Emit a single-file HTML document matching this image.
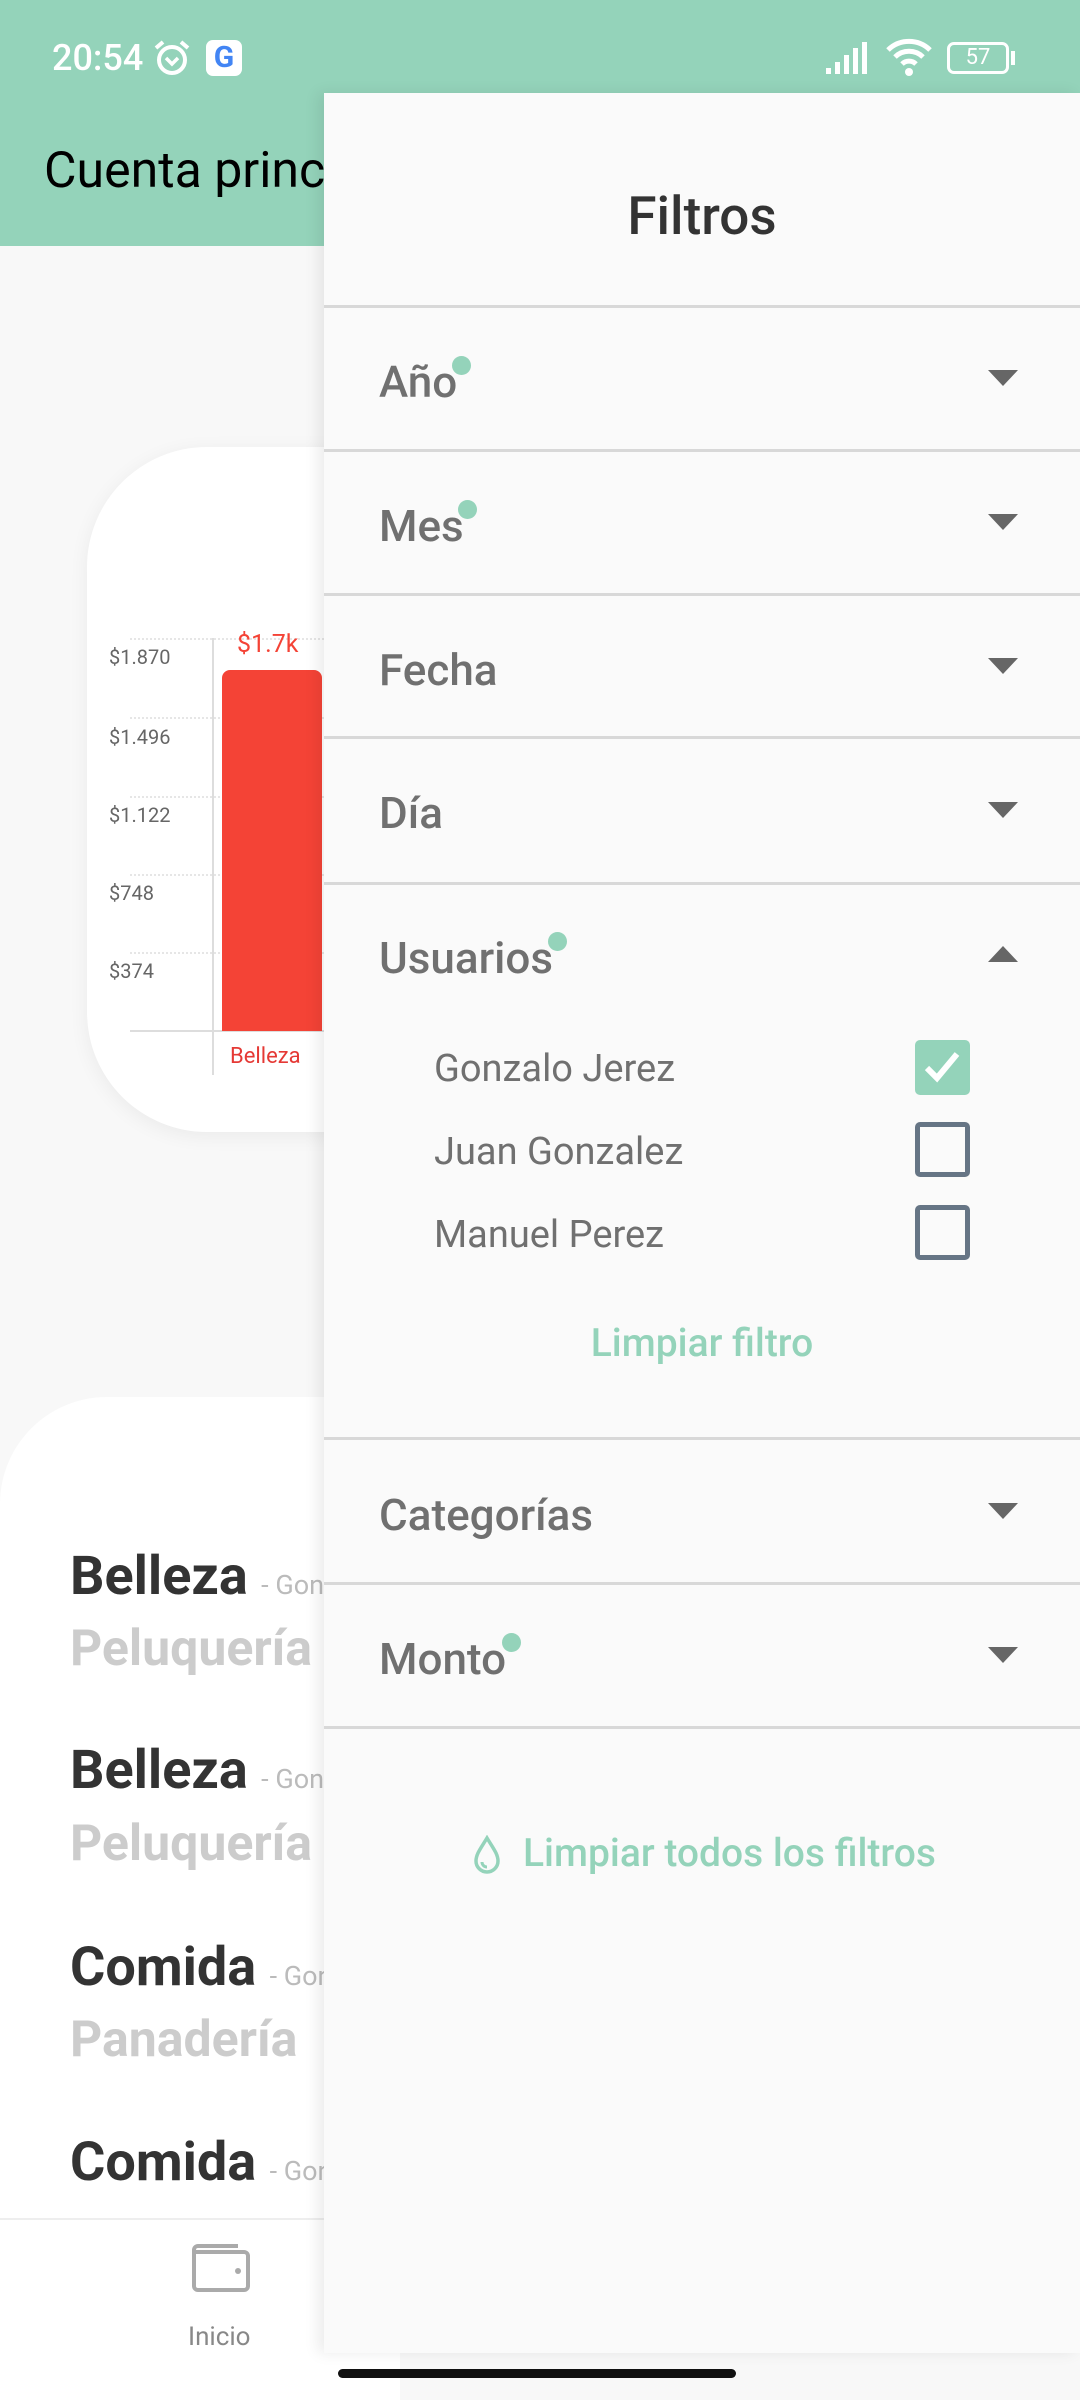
<!DOCTYPE html>
<html><head><meta charset="utf-8"><style>
*{margin:0;padding:0;box-sizing:border-box}
body{width:1080px;height:2400px;position:relative;overflow:hidden;background:#f8f8f8;font-family:"Roboto","Liberation Sans",sans-serif}
.abs{position:absolute}
.sb{left:0;top:0;width:1080px;height:246px;background:#94d3ba}
.t{white-space:nowrap;line-height:1}
.row{position:absolute;left:379px;font-size:44px;color:#707070;font-weight:500;transform:translateY(-50%)}
.dot{position:absolute;width:19px;height:19px;border-radius:50%;background:#94d3ba}
.arr{position:absolute;left:988px;width:0;height:0;border-left:15px solid transparent;border-right:15px solid transparent;border-top:16px solid #666}
.up{border-top:none;border-bottom:16px solid #666}
.hr{position:absolute;left:324px;width:756px;height:3px;background:#d8d8d8}
.u{position:absolute;left:434px;font-size:38px;color:#707070;transform:translateY(-50%)}
.cb{position:absolute;left:915px;width:55px;height:55px;border:5px solid #667585;border-radius:5px}
.yl{position:absolute;left:109px;font-size:20px;color:#666;transform:translateY(-50%)}
.gl{position:absolute;left:130px;width:194px;border-top:2px dotted #e6e6e6}
.li{position:absolute;left:70px;font-size:54px;font-weight:bold;color:#333;transform:translateY(-50%)}
.li span{font-size:27px;font-weight:normal;color:#bbb}
.sub{position:absolute;left:70px;font-size:50px;font-weight:bold;color:#ccc;transform:translateY(-50%)}
</style></head><body>
<div class="abs sb"></div>
<div class="abs t" style="left:52px;top:40px;font-size:36px;color:#fff;font-weight:500">20:54</div>
<svg class="abs" style="left:152px;top:38px" width="40" height="40" viewBox="0 0 40 40"><circle cx="20" cy="22" r="13" fill="none" stroke="#fff" stroke-width="4"/><path d="M14 20l6 6 6-6" fill="none" stroke="#fff" stroke-width="3.5"/><path d="M4 10l7-6M36 10l-7-6" stroke="#fff" stroke-width="4"/></svg>
<div class="abs" style="left:206px;top:40px;width:36px;height:36px;background:#fff;border-radius:7px;font-size:30px;font-weight:bold;color:#4285f4;text-align:center;line-height:36px">G</div>
<svg class="abs" style="left:824px;top:40px" width="50" height="36" viewBox="0 0 50 36"><rect x="2" y="28" width="5" height="6" fill="#fff"/><rect x="11" y="22" width="5" height="12" fill="#fff"/><rect x="20" y="15" width="5" height="19" fill="#fff"/><rect x="29" y="8" width="5" height="26" fill="#fff"/><rect x="38" y="2" width="5" height="32" fill="#fff"/></svg>
<svg class="abs" style="left:884px;top:36px" width="50" height="42" viewBox="0 0 50 42"><path d="M4 14a30 30 0 0 1 42 0M11 21a20 20 0 0 1 28 0M18 28a10 10 0 0 1 14 0" fill="none" stroke="#fff" stroke-width="5"/><circle cx="25" cy="36" r="4" fill="#fff"/></svg>
<div class="abs" style="left:947px;top:42px;width:62px;height:32px;border:3px solid #fff;border-radius:7px;font-size:22px;color:#fff;text-align:center;line-height:26px">57</div>
<div class="abs" style="left:1011px;top:51px;width:4px;height:14px;background:#fff"></div>
<div class="abs t" style="left:44px;top:146px;font-size:50px;color:#000">Cuenta principal</div>

<div class="abs" style="left:87px;top:447px;width:400px;height:685px;background:#fff;border-radius:120px;box-shadow:0 4px 20px rgba(0,0,0,.06)"></div>
<div class="gl" style="top:638px"></div><div class="gl" style="top:717px"></div><div class="gl" style="top:796px"></div><div class="gl" style="top:874px"></div><div class="gl" style="top:952px"></div>
<div class="yl t" style="top:657px">$1.870</div><div class="yl t" style="top:737px">$1.496</div><div class="yl t" style="top:815px">$1.122</div><div class="yl t" style="top:893px">$748</div><div class="yl t" style="top:971px">$374</div>
<div class="abs" style="left:212px;top:638px;width:2px;height:437px;background:#ddd"></div>
<div class="abs" style="left:130px;top:1030px;width:200px;height:2px;background:#ddd"></div>
<div class="abs" style="left:222px;top:670px;width:100px;height:361px;background:#f44336;border-radius:8px 8px 0 0"></div>
<div class="abs t" style="left:237px;top:632px;font-size:25px;color:#f44336">$1.7k</div>
<div class="abs t" style="left:230px;top:1046px;font-size:22px;color:#e53935">Belleza</div>

<div class="abs" style="left:0;top:1397px;width:400px;height:830px;background:#fff;border-top-left-radius:107px"></div>
<div class="li t" style="top:1577px">Belleza <span>- Gonzalo</span></div>
<div class="sub t" style="top:1649px">Peluquería</div>
<div class="li t" style="top:1771px">Belleza <span>- Gonzalo</span></div>
<div class="sub t" style="top:1844px">Peluquería</div>
<div class="li t" style="top:1968px">Comida <span>- Gonzalo</span></div>
<div class="sub t" style="top:2040px">Panadería</div>
<div class="li t" style="top:2163px">Comida <span>- Gonzalo</span></div>
<div class="abs" style="left:0;top:2218px;width:400px;height:182px;background:#fff;border-top:2px solid #eee"></div>
<svg class="abs" style="left:190px;top:2240px" width="64" height="54" viewBox="0 0 64 54"><path d="M6 12h48a4 4 0 0 1 4 4v30a4 4 0 0 1-4 4H8a4 4 0 0 1-4-4V10a4 4 0 0 1 4-4h40" fill="none" stroke="#aaa" stroke-width="4"/><circle cx="48" cy="31" r="3" fill="#aaa"/></svg>
<div class="abs t" style="left:188px;top:2324px;font-size:26px;color:#888">Inicio</div>

<div class="abs" style="left:324px;top:93px;width:756px;height:2260px;background:#fafafa;box-shadow:-6px 0 14px rgba(0,0,0,.08)"></div>
<div class="abs t" style="left:324px;width:756px;text-align:center;top:190px;font-size:53px;font-weight:500;color:#333">Filtros</div>
<div class="hr" style="top:305px"></div><div class="hr" style="top:449px"></div><div class="hr" style="top:593px"></div><div class="hr" style="top:736px"></div><div class="hr" style="top:882px"></div><div class="hr" style="top:1437px"></div><div class="hr" style="top:1582px"></div><div class="hr" style="top:1726px"></div>
<div class="row t" style="top:382px">Año</div><div class="dot" style="left:452px;top:356px"></div><div class="arr" style="top:370px"></div>
<div class="row t" style="top:526px">Mes</div><div class="dot" style="left:458px;top:500px"></div><div class="arr" style="top:514px"></div>
<div class="row t" style="top:670px">Fecha</div><div class="arr" style="top:658px"></div>
<div class="row t" style="top:813px">Día</div><div class="arr" style="top:802px"></div>
<div class="row t" style="top:958px">Usuarios</div><div class="dot" style="left:548px;top:932px"></div><div class="arr up" style="top:946px"></div>
<div class="u t" style="top:1069px">Gonzalo Jerez</div>
<div class="u t" style="top:1152px">Juan Gonzalez</div>
<div class="u t" style="top:1235px">Manuel Perez</div>
<div class="cb" style="top:1040px;background:#94d3ba;border-color:#94d3ba"></div>
<svg class="abs" style="left:915px;top:1040px" width="55" height="55" viewBox="0 0 55 55"><path d="M12 28l10 10 20-24" fill="none" stroke="#fff" stroke-width="6"/></svg>
<div class="cb" style="top:1122px"></div>
<div class="cb" style="top:1205px"></div>
<div class="abs t" style="left:324px;width:756px;text-align:center;top:1324px;font-size:39px;font-weight:500;color:#94d3ba">Limpiar filtro</div>
<div class="row t" style="top:1515px">Categorías</div><div class="arr" style="top:1503px"></div>
<div class="row t" style="top:1659px">Monto</div><div class="dot" style="left:502px;top:1633px"></div><div class="arr" style="top:1647px"></div>
<svg class="abs" style="left:472px;top:1835px" width="30" height="40" viewBox="0 0 30 40"><path d="M15 3C9 13 4 19 4 26a11 11 0 0 0 22 0C26 19 21 13 15 3z" fill="none" stroke="#94d3ba" stroke-width="3.5"/><path d="M10 27a5 5 0 0 0 5 5" fill="none" stroke="#94d3ba" stroke-width="3"/></svg>
<div class="abs t" style="left:523px;top:1834px;font-size:39px;font-weight:500;color:#94d3ba">Limpiar todos los filtros</div>
<div class="abs" style="left:338px;top:2369px;width:398px;height:9px;border-radius:5px;background:#111"></div>
</body></html>
